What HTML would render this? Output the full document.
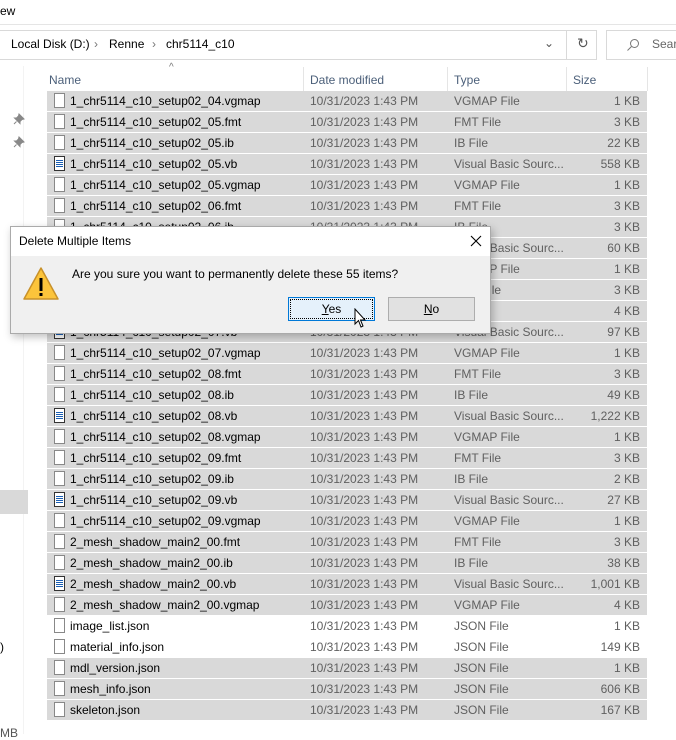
<!DOCTYPE html>
<html><head><meta charset="utf-8"><style>
*{margin:0;padding:0;box-sizing:border-box}
body{width:676px;height:734px;overflow:hidden;background:#fff;font-family:"Liberation Sans",sans-serif;font-size:12px;color:#000;position:relative}
.a{position:absolute;white-space:nowrap}
.row{position:absolute;left:47px;width:600px;height:20px;background:#d9d9d9}
.row.w{background:#fff}
.row span{position:absolute;top:3px;color:#000}
.row .d,.row .t,.row .s{color:#606060}
.ic{position:absolute;left:7px;top:2px;width:11px;height:15px;border:1px solid #888;background:#fff}
.ic.vb::after{content:"";position:absolute;left:1px;top:3px;width:7px;height:8px;background:repeating-linear-gradient(#1a5fb4 0 1px,#fff 1px 2px)}
.ic.vb{border-color:#333}
</style></head><body>
<div class="a" style="left:0;top:4px;color:#000">ew</div>
<div class="a" style="left:0;top:24px;width:676px;height:1px;background:#e5e5e5"></div>
<div class="a" style="left:-2px;top:30px;width:599px;height:30px;border:1px solid #d9d9d9"></div>
<div class="a" style="left:11px;top:37px">Local Disk (D:)</div>
<div class="a" style="left:94px;top:37px;color:#777">›</div>
<div class="a" style="left:109px;top:37px">Renne</div>
<div class="a" style="left:152px;top:37px;color:#777">›</div>
<div class="a" style="left:166px;top:37px">chr5114_c10</div>
<div class="a" style="left:544px;top:36px;color:#555">⌄</div>
<div class="a" style="left:566px;top:31px;width:1px;height:28px;background:#d9d9d9"></div>
<div class="a" style="left:577px;top:35px;color:#555;font-size:14px">↻</div>
<div class="a" style="left:606px;top:30px;width:72px;height:30px;border:1px solid #d9d9d9"></div>
<svg class="a" style="left:626px;top:38px" width="14" height="14" viewBox="0 0 14 14"><circle cx="8.5" cy="5.5" r="4" fill="none" stroke="#777"/><path d="M5.5 8.5 L1.5 12.5" stroke="#777"/></svg>
<div class="a" style="left:652px;top:37px;color:#666">Sear</div>
<div class="a" style="left:23px;top:66px;width:1px;height:668px;background:#f3f3f3"></div>
<div class="a" style="left:169px;top:62px;color:#777;font-size:10px">^</div>
<div class="a" style="left:49px;top:73px;color:#4c607a">Name</div>
<div class="a" style="left:303px;top:67px;width:1px;height:24px;background:#e5e5e5"></div>
<div class="a" style="left:310px;top:73px;color:#4c607a">Date modified</div>
<div class="a" style="left:447px;top:67px;width:1px;height:24px;background:#e5e5e5"></div>
<div class="a" style="left:454px;top:73px;color:#4c607a">Type</div>
<div class="a" style="left:566px;top:67px;width:1px;height:24px;background:#e5e5e5"></div>
<div class="a" style="left:573px;top:73px;color:#4c607a">Size</div>
<div class="a" style="left:647px;top:67px;width:1px;height:24px;background:#e5e5e5"></div>
<svg class="a" style="left:13px;top:113px" width="12" height="12" viewBox="0 0 12 12"><path d="M6 1 L11 6 L9 6.5 L7 8.5 L7 10.5 L1.5 5 L3.5 5 L5.5 3 Z M3.5 8.5 L1 11" fill="#888" stroke="#888"/></svg>
<svg class="a" style="left:13px;top:136px" width="12" height="12" viewBox="0 0 12 12"><path d="M6 1 L11 6 L9 6.5 L7 8.5 L7 10.5 L1.5 5 L3.5 5 L5.5 3 Z M3.5 8.5 L1 11" fill="#888" stroke="#888"/></svg>
<div class="a" style="left:0;top:490px;width:28px;height:24px;background:#d9d9d9"></div>
<div class="a" style="left:0;top:640px">)</div>
<div class="a" style="left:0;top:726px;color:#555">MB</div>
<div id="rows"></div>
<script>
var R=[["1_chr5114_c10_setup02_04.vgmap","VGMAP File","1 KB"],["1_chr5114_c10_setup02_05.fmt","FMT File","3 KB"],["1_chr5114_c10_setup02_05.ib","IB File","22 KB"],["1_chr5114_c10_setup02_05.vb","Visual Basic Sourc...","558 KB"],["1_chr5114_c10_setup02_05.vgmap","VGMAP File","1 KB"],["1_chr5114_c10_setup02_06.fmt","FMT File","3 KB"],["1_chr5114_c10_setup02_06.ib","IB File","3 KB"],["1_chr5114_c10_setup02_06.vb","Visual Basic Sourc...","60 KB"],["1_chr5114_c10_setup02_06.vgmap","VGMAP File","1 KB"],["1_chr5114_c10_setup02_07.fmt","FMT File","3 KB"],["1_chr5114_c10_setup02_07.ib","IB File","4 KB"],["1_chr5114_c10_setup02_07.vb","Visual Basic Sourc...","97 KB"],["1_chr5114_c10_setup02_07.vgmap","VGMAP File","1 KB"],["1_chr5114_c10_setup02_08.fmt","FMT File","3 KB"],["1_chr5114_c10_setup02_08.ib","IB File","49 KB"],["1_chr5114_c10_setup02_08.vb","Visual Basic Sourc...","1,222 KB"],["1_chr5114_c10_setup02_08.vgmap","VGMAP File","1 KB"],["1_chr5114_c10_setup02_09.fmt","FMT File","3 KB"],["1_chr5114_c10_setup02_09.ib","IB File","2 KB"],["1_chr5114_c10_setup02_09.vb","Visual Basic Sourc...","27 KB"],["1_chr5114_c10_setup02_09.vgmap","VGMAP File","1 KB"],["2_mesh_shadow_main2_00.fmt","FMT File","3 KB"],["2_mesh_shadow_main2_00.ib","IB File","38 KB"],["2_mesh_shadow_main2_00.vb","Visual Basic Sourc...","1,001 KB"],["2_mesh_shadow_main2_00.vgmap","VGMAP File","4 KB"],["image_list.json","JSON File","1 KB"],["material_info.json","JSON File","149 KB"],["mdl_version.json","JSON File","1 KB"],["mesh_info.json","JSON File","606 KB"],["skeleton.json","JSON File","167 KB"]];
var h="";R.forEach(function(r,i){var w=(i==25||i==26)?" w":"";var vb=r[1].indexOf("Visual")==0?" vb":"";
h+='<div class="row'+w+'" style="top:'+(91+21*i)+'px"><div class="ic'+vb+'"></div><span style="left:23px">'+r[0]+'</span><span class="d" style="left:263px">10/31/2023 1:43 PM</span><span class="t" style="left:407px">'+r[1]+'</span><span class="s" style="right:7px">'+r[2]+'</span></div>';});
document.getElementById("rows").innerHTML=h;
</script>
<div class="a" style="left:10px;top:226px;width:481px;height:108px;background:#f0f0f0;border:1px solid #aaa;box-shadow:2px 3px 8px rgba(0,0,0,.25)">
 <div style="position:absolute;left:0;top:0;width:479px;height:29px;background:#fff"></div>
 <div class="a" style="left:8px;top:7px">Delete Multiple Items</div>
 <svg class="a" style="left:459px;top:8px" width="12" height="12" viewBox="0 0 12 12"><path d="M1 1 L11 11 M11 1 L1 11" stroke="#000" stroke-width="1.1"/></svg>
 <svg class="a" style="left:11px;top:38px" width="38" height="38" viewBox="0 0 38 38"><path d="M19 3 L36 34 L2 34 Z" fill="#fcc43b" stroke="#c8912a" stroke-width="1.5" stroke-linejoin="round"/><rect x="17.5" y="13" width="3" height="13" fill="#000"/><rect x="17.5" y="28" width="3" height="3" fill="#000"/></svg>
 <div class="a" style="left:61px;top:40px">Are you sure you want to permanently delete these 55 items?</div>
 <div class="a" style="left:277px;top:70px;width:87px;height:24px;background:#e5f1fb;border:1px solid #0078d7;outline:1px dotted #000;outline-offset:-3px;text-align:center;line-height:22px"><u>Y</u>es</div>
 <div class="a" style="left:377px;top:70px;width:87px;height:24px;background:#e1e1e1;border:1px solid #adadad;text-align:center;line-height:22px"><u>N</u>o</div>
 <svg class="a" style="left:343px;top:81px" width="14" height="22" viewBox="0 0 14 22"><path d="M1 1 L1 16 L4.5 12.5 L7 19 L9 18 L6.5 12 L11 12 Z" fill="#fff" stroke="#000" stroke-width="1"/></svg>
</div>
</body></html>
